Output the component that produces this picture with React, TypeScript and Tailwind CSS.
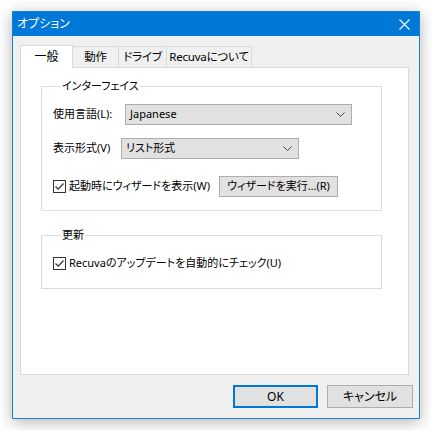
import { ReactNode } from "react";

const font = "font-['Noto_Sans','Noto_Sans_CJK_JP',sans-serif] [font-feature-settings:'palt']";

function Check({ children }: { children: ReactNode }) {
  return (
    <label className="flex items-center">
      <span className="flex h-[13px] w-[13px] items-center justify-center border border-[#333] bg-white">
        <svg width="11" height="11" viewBox="0 0 11 11" fill="none">
          <path d="M1.5 5.5 L4.2 8.2 L9.5 2.5" stroke="#333" strokeWidth="1.2" />
        </svg>
      </span>
      <span className="ml-[3px]">{children}</span>
    </label>
  );
}

function Combo({ value, className }: { value: string; className: string }) {
  return (
    <div
      className={`flex h-[21px] items-center justify-between border border-[#adadad] bg-[#e1e1e1] pl-[4px] pr-[6px] ${className}`}
    >
      <span>{value}</span>
      <svg width="9" height="5" viewBox="0 0 9 5" fill="none">
        <path d="M0.5 0.5 L4.5 4.5 L8.5 0.5" stroke="#444" strokeWidth="1" />
      </svg>
    </div>
  );
}

function Group({ title, children, className }: { title: string; children: ReactNode; className: string }) {
  return (
    <fieldset className={`border border-[#dcdcdc] pl-[11px] ${className}`}>
      <legend className="ml-[8px] px-[1px] leading-[16px]">{title}</legend>
      {children}
    </fieldset>
  );
}

const tabs = [
  { label: "動作", w: "w-[47px]" },
  { label: "ドライブ", w: "w-[49px]" },
  { label: "Recuvaについて", w: "w-[86px]" },
];

export default function App() {
  return (
    <div className={`h-[430px] w-[432px] bg-white pl-[12px] pt-[11px] text-[11px] text-black ${font}`}>
      <div className="flex h-[408px] w-[408px] flex-col border border-[#1a7fd8] bg-[#f0f0f0] shadow-[0_3px_14px_rgba(0,0,0,0.3)]">
        <div className="flex h-[24px] items-center justify-between bg-[#0078d7] pl-[4px] pr-[9px] text-[12px] text-white">
          <span>オプション</span>
          <svg width="11" height="11" viewBox="0 0 11 11" fill="none">
            <path d="M0.5 0.5 L10.5 10.5 M10.5 0.5 L0.5 10.5" stroke="white" strokeWidth="1.1" />
          </svg>
        </div>
        <div className="flex flex-1 flex-col pl-[7px] pr-[9px] pt-[9px]">
          <div className="flex h-[22px] items-end">
            <div className="relative z-10 -mb-px flex h-[23px] w-[53px] items-center justify-center border border-b-0 border-[#d9d9d9] bg-white text-[12px]">
              一般
            </div>
            {tabs.map((t) => (
              <div
                key={t.label}
                className={`-ml-px flex h-[21px] items-center justify-center border border-b-0 border-[#d9d9d9] bg-[#f0f0f0] text-[11.5px] tracking-[-0.2px] first:ml-0 ${t.w}`}
              >
                {t.label}
              </div>
            ))}
          </div>
          <div className="flex h-[308px] w-[389px] flex-col border border-[#d9d9d9] bg-white pl-[20px] pr-[26px]">
            <Group title="インターフェイス" className="mt-[10px] h-[133px] pt-[10px]">
              <div className="flex h-[21px] items-center">
                <span className="w-[72px]">使用言語(L):</span>
                <Combo value="Japanese" className="w-[227px]" />
              </div>
              <div className="mt-[13px] flex h-[21px] items-center">
                <span className="w-[68px]">表示形式(V)</span>
                <Combo value="リスト形式" className="w-[178px]" />
              </div>
              <div className="mt-[17px] flex h-[21px] items-center">
                <div className="w-[166px]">
                  <Check>起動時にウィザードを表示(W)</Check>
                </div>
                <button className="flex h-[21px] w-[119px] items-center justify-center border border-[#adadad] bg-[#e1e1e1]">
                  ウィザードを実行…(R)
                </button>
              </div>
            </Group>
            <Group title="更新" className="mt-[16px] h-[62px]">
              <div className="mt-[12px]">
                <Check>Recuvaのアップデートを自動的にチェック(U)</Check>
              </div>
            </Group>
          </div>
          <div className="mt-[10px] flex justify-end gap-[9px]">
            <button className="flex h-[23px] w-[85px] items-center justify-center border-2 border-[#0078d7] bg-[#e1e1e1] text-[12px]">
              OK
            </button>
            <button className="-mr-[3px] flex h-[23px] w-[86px] items-center justify-center border border-[#adadad] bg-[#e1e1e1] text-[12px]">
              キャンセル
            </button>
          </div>
        </div>
      </div>
    </div>
  );
}
